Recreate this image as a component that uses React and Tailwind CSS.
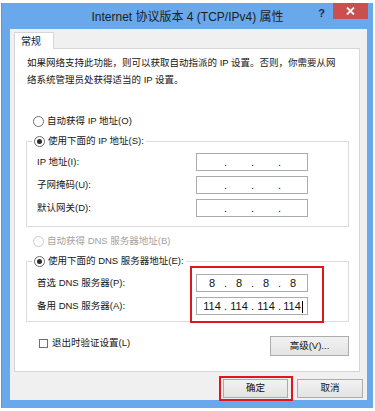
import React from 'react';

const font = { fontFamily: '"Liberation Sans", "Noto Sans CJK SC", sans-serif' };

function Radio({ checked, disabled }) {
  return (
    <span
      className={`w-[11px] h-[11px] rounded-full border flex items-center justify-center bg-white shrink-0 ${
        disabled ? 'border-[#c8c8c8]' : 'border-[#6f6f6f]'
      }`}
    >
      {checked && <span className="w-[5px] h-[5px] rounded-full bg-[#2b2b2b]" />}
    </span>
  );
}

// IPv4 input with four segments and fixed dots
function IpField({ parts = ['', '', '', ''], caret }) {
  return (
    <div className="w-[112px] h-[18px] border border-[#ababab] bg-white flex items-center pl-[3px] text-[11px] text-[#111]">
      {parts.map((p, i) => (
        <React.Fragment key={i}>
          <span className="w-[24px] text-center leading-[16px] relative">
            {p}
            {caret && i === 3 && <span className="inline-block w-px h-[12px] bg-black align-middle ml-px" />}
          </span>
          {i < 3 && <span className="w-[3px] text-center leading-[16px]">.</span>}
        </React.Fragment>
      ))}
    </div>
  );
}

function FieldRow({ label, parts, caret }) {
  return (
    <div className="flex items-center h-[18px]">
      <span className="w-[169px] pl-[10px]">{label}</span>
      <IpField parts={parts} caret={caret} />
    </div>
  );
}

function Button({ children, className = '' }) {
  return (
    <div
      className={`h-[19px] border border-[#acacac] bg-gradient-to-b from-[#f2f2f2] to-[#e3e3e3] flex items-center justify-center text-[9.5px] text-[#111] ${className}`}
    >
      {children}
    </div>
  );
}

export default function App() {
  return (
    <div className="w-[375px] h-[411px] bg-white overflow-hidden pt-[3px] pl-[1px]" style={font}>
      {/* window frame */}
      <div className="w-[372px] h-[405px] bg-[#6aa8ec] border-l border-[#8d8d8d] flex flex-col pl-[8px] pr-[6px] pb-[8px]">
        {/* title bar */}
        <div className="h-[26px] grid grid-cols-[1fr_auto_1fr] -ml-[8px] -mr-[6px]">
          <div />
          <div className="text-[12px] text-[#1d1d1d] pt-[6px] leading-[16px]">
            Internet 协议版本 4 (TCP/IPv4) 属性
          </div>
          <div className="flex justify-end items-start pr-[5px]">
            <span className="text-[11px] font-bold text-[#1a2a44] mt-[3px] mr-[8px] leading-[14px]">?</span>
            <div className="w-[35px] h-[16px] bg-[#c9504f] flex items-center justify-center">
              <svg width="9" height="8" viewBox="0 0 9 8">
                <path d="M1 0.5 L8 7.5 M8 0.5 L1 7.5" stroke="white" strokeWidth="1.8" />
              </svg>
            </div>
          </div>
        </div>

        {/* client area */}
        <div className="flex-1 bg-[#f0f0f0] flex flex-col text-[9.5px] text-[#161616]">
          <div className="ml-[4px] mt-[3px] w-[40px] h-[17px] bg-white border border-b-0 border-[#d6d6d6] -mb-px relative pl-[6px] pt-[2px] leading-[14px] text-[10px]">
            常规
          </div>
          <div className="ml-[4px] mr-[7px] h-[324px] bg-white border border-[#d6d6d6] flex flex-col">
            <p className="mt-[5px] pl-[12px] leading-[17px]">
              如果网络支持此功能，则可以获取自动指派的 IP 设置。否则，你需要从网
              <br />
              络系统管理员处获得适当的 IP 设置。
            </p>

            <div className="mt-[26px] ml-[18px] h-[14px] flex items-center gap-[3px]">
              <Radio />
              <span>自动获得 IP 地址(O)</span>
            </div>

            {/* static IP group */}
            <div className="mt-[13px] ml-[11px] w-[323px] border border-[#dcdcdc] pb-[9px] flex flex-col">
              <div className="-mt-[8px] ml-[5px] px-[2px] w-fit h-[14px] bg-white flex items-center gap-[3px]">
                <Radio checked />
                <span>使用下面的 IP 地址(S):</span>
              </div>
              <div className="mt-[5px] flex flex-col gap-[5px]">
                <FieldRow label="IP 地址(I):" />
                <FieldRow label="子网掩码(U):" />
                <FieldRow label="默认网关(D):" />
              </div>
            </div>

            <div className="mt-[7px] ml-[18px] h-[14px] flex items-center gap-[3px] text-[#a3a3a3]">
              <Radio disabled />
              <span>自动获得 DNS 服务器地址(B)</span>
            </div>

            {/* DNS group */}
            <div className="mt-[13px] ml-[11px] w-[323px] border border-[#dcdcdc] pb-[6px] flex flex-col relative">
              <div className="-mt-[8px] ml-[5px] px-[2px] w-fit h-[14px] bg-white flex items-center gap-[3px]">
                <Radio checked />
                <span>使用下面的 DNS 服务器地址(E):</span>
              </div>
              <div className="mt-[6px] flex flex-col gap-[5px]">
                <FieldRow label="首选 DNS 服务器(P):" parts={['8', '8', '8', '8']} />
                <FieldRow label="备用 DNS 服务器(A):" parts={['114', '114', '114', '114']} caret />
              </div>
              <div className="absolute left-[163px] top-[4px] w-[134px] h-[57px] border-2 border-[#e3151c]" />
            </div>

            <div className="mt-[14px] pl-[24px] pr-[10px] flex justify-between items-start">
              <div className="h-[14px] flex items-center gap-[4px]">
                <span className="w-[9px] h-[9px] border border-[#6f6f6f] bg-white" />
                <span>退出时验证设置(L)</span>
              </div>
              <Button className="w-[79px] h-[20px]">高级(V)...</Button>
            </div>
          </div>

          {/* dialog buttons */}
          <div className="mt-[7px] mr-[4px] flex justify-end gap-[9px]">
            <div className="relative">
              <Button className="w-[65px] border-[#3c7fb1] from-[#eaf3fb] to-[#dcecfc]">确定</Button>
              <div className="absolute -left-[4px] -top-[3px] -right-[5px] -bottom-[3px] border-2 border-[#e3151c]" />
            </div>
            <Button className="w-[66px]">取消</Button>
          </div>
        </div>
      </div>
    </div>
  );
}
